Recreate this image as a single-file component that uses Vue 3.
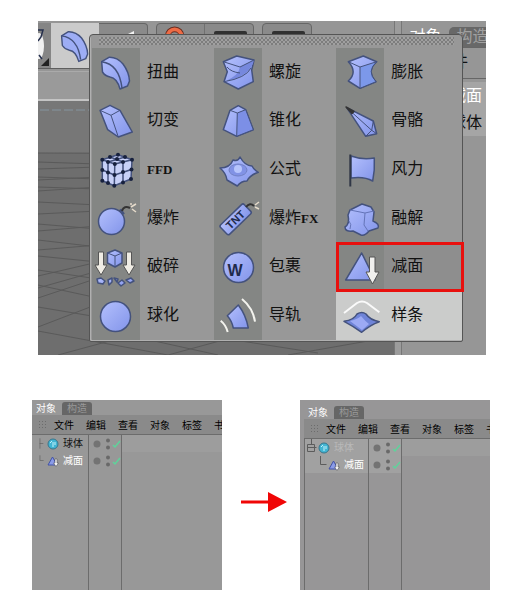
<template>
  <main class="page">
    <section class="scene">
      <div class="workspace">
        <div class="toolbar">
          <button class="tool-corner" aria-label="选项">
            <svg viewBox="0 0 12 45" width="12" height="45">
              <ellipse cx="1" cy="23" rx="5" ry="13" fill="#f0f0f0" />
              <path d="M0 7h5l-2 7-3 4M1 32l3 4" fill="none" stroke="#26304e" stroke-width="1.5" />
              <path d="M11 35v8H3z" fill="#222" />
            </svg>
          </button>
          <button class="tool-active" aria-label="变形器">
            <svg viewBox="0 0 48 48" width="48" height="45" class="shape">
              <path d="M9.7 13.7L17 9.3Q25 9 31 16Q37 24 37.5 33L35.5 38L28 41Q25 30 18 29Q13 28 10.5 24Z" />
              <path d="M9.7 13.7Q27 16 30 39" fill="none" />
            </svg>
          </button>
          <div class="tool-group first">
            <svg viewBox="0 0 48 45" width="48" height="45"><path d="M27 11l8-4v8h-8z" fill="#f3f3f3" /></svg>
          </div>
          <div class="tool-group">
            <svg viewBox="0 0 48 45" width="47" height="45">
              <circle cx="18" cy="12" r="7" fill="none" stroke="#6b2d20" stroke-width="6" />
              <circle cx="18" cy="12" r="7" fill="none" stroke="#ee6b45" stroke-width="4" />
            </svg>
            <svg class="split" viewBox="0 0 48 45" width="48" height="45"><rect x="9" y="7" width="33" height="9" rx="2" fill="#303030" /></svg>
          </div>
          <div class="tool-group">
            <svg viewBox="0 0 48 45" width="48" height="45"><rect x="9" y="7" width="33" height="9" rx="2" fill="#303030" /></svg>
          </div>
        </div>
        <div class="view-menu"></div>
        <div class="viewport">
          <svg viewBox="0 0 356 254" preserveAspectRatio="none">
            <rect width="356" height="254" fill="#6e6e6e" />
            <rect width="356" height="52" fill="#777" />
            <path d="M2 9h50" stroke="#8595a0" stroke-dasharray="9 3" />
            <g fill="none" stroke="#5a5a5a">
              <path d="M0 52L356 53M0 61L60 63M0 68L60 66M0 76L60 78M0 79L60 76" />
              <path d="M0 86L60 88M0 90L60 86M0 101L60 104M0 113L60 110" />
              <path d="M0 123L60 128M0 130L60 125M0 139L60 146M0 149L60 144" />
              <path d="M0 155L60 161M0 175L60 161M0 187L60 170M0 169L60 178" />
              <path d="M0 197L60 177M0 184L60 197M0 206L60 216M0 226L120 180" />
              <path d="M0 230L130 254M20 254L90 235M80 232L180 254M130 254L200 235M190 238L280 252M250 254L330 240" />
            </g>
          </svg>
        </div>
      </div>

      <aside class="dock">
        <div class="dock-tabs">
          <button class="dock-tab">对象</button>
          <button class="dock-tab dim">构造</button>
        </div>
        <div class="dock-menu">文件</div>
        <div class="dock-list">
          <span class="picked">减面</span>
          <span>球体</span>
        </div>
      </aside>

      <div class="popup" role="menu">
        <div class="grip"></div>
        <div class="tools">
          <button
            v-for="tool in tools"
            :key="tool.id"
            class="tool"
            :class="tool.state"
            role="menuitem"
          >
            <span class="tool-icon">
              <svg
                viewBox="0 0 48 48"
                width="48"
                height="48"
                class="shape"
                :style="{ fill: `url(#fill-${tool.id})` }"
              >
                <defs>
                  <linearGradient :id="'fill-' + tool.id" x1="0" y1="0" x2="1" y2="1">
                    <stop offset="0" stop-color="#b4c0fd" />
                    <stop offset="1" stop-color="#8294ea" />
                  </linearGradient>
                </defs>
                <template v-if="tool.id === 'bend'">
                  <path d="M9.7 13.7L17 9.3Q25 9 31 16Q37 24 37.5 33L35.5 38L28 41Q25 30 18 29Q13 28 10.5 24Z" />
                  <path d="M9.7 13.7Q27 16 30 40" fill="none" />
                </template>
                <template v-else-if="tool.id === 'twist'">
                  <path d="M9.3 13.7L22.7 8L40 12L37.7 22L39.3 33.7L24.3 41L10 33.7L13.3 23.7Z" />
                  <path d="M26 19L40 12Q37 28 12 33Q25 27 26 19Z" fill="#7688dd" stroke="none" />
                  <path d="M9.3 13.7L26 19L40 12M13 19Q17 24 26 25M37 20Q32 30 10 33.7" fill="none" stroke-width="1" />
                </template>
                <template v-else-if="tool.id === 'bulge'">
                  <path d="M12.3 13.7L27.3 8L40.7 13.7Q30 23 40 33.7L24 40.3L12.3 33Q22 24 12.3 13.7Z" />
                  <path d="M24 19L40.7 13.7Q30 23 40 33.7L24 40.3Z" fill="#7c98ea" stroke-width="1" />
                  <path d="M12.3 13.7L24 19" stroke-width="1" />
                </template>
                <template v-else-if="tool.id === 'shear'">
                  <path d="M8 13.3L18 8.3L28 13.3L40.3 35L26.3 40L15.7 32.7Z" />
                  <path d="M8 13.3L19 18.3L28 13.3M19 18.3L26.3 40" fill="none" stroke-width="1" />
                </template>
                <template v-else-if="tool.id === 'taper'">
                  <path d="M16 13.3L24.3 8.7L31.7 12.7L39.3 32.7L22.7 39.3L9.3 32.7Z" />
                  <path d="M23.3 16L31.7 12.7L39.3 32.7L22.7 39.3Z" fill="#7c8fe6" stroke-width="1" />
                  <path d="M16 13.3L23.3 16" stroke-width="1" />
                </template>
                <template v-else-if="tool.id === 'bone'">
                  <path d="M10.7 10.7L37.3 24L40.7 36.7L29.7 39.3Z" />
                  <path d="M10.7 10.7L35.7 33.3L40.7 36.7M35.7 33.3L29.7 39.3M35.7 33.3L37.3 24" fill="none" stroke-width="1" />
                  <path d="M10 10L18 14.5L16 16.5Z" fill="#333" stroke="#333" />
                </template>
                <template v-else-if="tool.id === 'ffd'">
                  <path d="M10.3 13.7L26 8.7L40 13.7L39 33L22.3 39.7L10.3 34.7Z" fill="#c8d1f8" />
                  <path
                    d="M10.3 13.7L22.8 18L40 13.7M22.8 18L22.3 39.7M10.3 24L22.5 29L39.5 23.5M16 16L16 37M31 16L31 36.5M18 11L31 16M33 11L16 16"
                    fill="none"
                  />
                  <circle v-for="(p, i) in ffdPoints" :key="i" :cx="p[0]" :cy="p[1]" r="2" fill="#17213e" stroke="none" />
                </template>
                <template v-else-if="tool.id === 'formula'">
                  <path d="M6 22Q16 22 19 14Q24 16 26 11Q31 20 38 20Q40 24 44.3 26.3Q36 29 33 35Q27 35 23.3 40Q18 37 13 34Q12 27 6 22Z" />
                  <ellipse cx="24" cy="24" rx="9" ry="6" fill="#8192e5" stroke="#7180c4" stroke-width="1" />
                  <circle cx="24" cy="23" r="4" fill="#b6c4fc" stroke="none" />
                </template>
                <template v-else-if="tool.id === 'wind'">
                  <path d="M15 10Q26 14 38.3 12Q39 24 36.7 35Q28 30 15 32Z" />
                  <path d="M14.3 8.5V40.5" stroke="#303746" stroke-width="2" />
                </template>
                <template v-else-if="tool.id === 'bomb'">
                  <path d="M27 20L31 17" stroke-width="6" />
                  <circle cx="19.5" cy="27.5" r="13" />
                  <path d="M30 17Q32 11 38 14" fill="none" stroke="#333" stroke-width="2" />
                  <path d="M39 13l5-3M40 15l4 3M39 11v-2" stroke="#e6dccb" />
                </template>
                <template v-else-if="tool.id === 'tnt'">
                  <g transform="rotate(-44 22 25)">
                    <rect x="5" y="18.5" width="33" height="13" rx="2" />
                    <text x="21" y="29" class="tnt">TNT</text>
                  </g>
                  <path d="M32 13Q36 8 40 12" fill="none" stroke="#333" stroke-width="2" />
                  <path d="M41 11l4-3M41 13l4 2" stroke="#e6dccb" />
                </template>
                <template v-else-if="tool.id === 'melt'">
                  <path d="M14 16L26 10L35 13L38 18L37 27Q44 30 42 34L33 37Q29 42 25 41L17 37Q9 38 9 33Q14 30 12 21Z" />
                  <path d="M14 16L29 19L38 17M29 19L28 31L32 37M13 27Q16 30 14 35" fill="none" stroke="#6474b8" stroke-width="1" />
                </template>
                <template v-else-if="tool.id === 'crush'">
                  <path d="M15.5 10L23 7L30 10V20L23 24L15.5 20Z" />
                  <path d="M15.5 10L23 13L30 10M23 13V24" fill="none" stroke-width="1" />
                  <path
                    d="M6.5 9h5v13h3.5l-6 10-6-10h3.5zM34.5 9h5v13h3.5l-6 10-6-10h3.5z"
                    fill="#efece4" stroke="#555" stroke-width="1"
                  />
                  <path d="M5 36l4-1 4 3-2 3-5-1zM16 37l4-2v4l-3 3zM22 35l4 1-1 3zM26 40l4-3 3 3-4 3zM34 37l5-2 3 3-4 2z" />
                </template>
                <template v-else-if="tool.id === 'wrap'">
                  <circle cx="24.5" cy="24.5" r="15" />
                  <text x="21" y="33" class="wrap-letter">W</text>
                </template>
                <template v-else-if="tool.id === 'reduce'">
                  <path d="M25.7 10L9.7 37H39Z" />
                  <path d="M33.5 14H39v15h4l-6.500 12-6.500-12h3.500z" fill="#f0f0ee" stroke="#555" stroke-width="1" />
                </template>
                <template v-else-if="tool.id === 'sphere'">
                  <circle cx="23.5" cy="24.5" r="15" />
                </template>
                <template v-else-if="tool.id === 'rail'">
                  <path d="M13.3 23.7L24.3 13Q32 23 34.3 36H19.3Q18 29 13.3 23.7Z" />
                  <path d="M28 7Q39 16 41 29.7M6.700 28.7Q12 33 13.7 40" fill="none" stroke="#f3f3ee" stroke-width="2" />
                </template>
                <template v-else>
                  <path d="M8 29.3Q18 28 21 22Q26 19 30 22Q34 28 43.3 29.7Q34 33 25.7 40.3Q17 34 8 29.3Z" fill="#6f84d8" />
                  <path d="M14 29Q22 27 25 24Q29 29 33 32L26 38Z" fill="#9caaf4" stroke="none" />
                  <path d="M8 21L21 11Q26 8 31 11L43.3 20.3" fill="none" stroke="#fafafa" stroke-width="2" />
                </template>
              </svg>
            </span>
            <span class="tool-name">{{ tool.name }}<span class="latin">{{ tool.latin }}</span></span>
          </button>
        </div>
      </div>
    </section>

    <section class="steps">
      <div v-for="panel in panels" :key="panel.id" class="manager" :class="panel.id">
        <div class="tabs">
          <button class="tab">对象</button>
          <button class="tab off">构造</button>
        </div>
        <div class="menu">
          <span class="menu-grip"></span>
          <button v-for="item in menuItems" :key="item">{{ item }}</button>
        </div>
        <div class="body">
          <div class="names">
            <div v-for="row in panel.rows" :key="row.name" class="row" :class="[row.tone, { child: row.child }]">
              <svg class="branch" viewBox="0 0 13 17" width="13" height="17">
                <path :d="row.branch" fill="none" stroke="#5c5c5c" />
              </svg>
              <svg v-if="row.name === '球体'" viewBox="0 0 12 12" width="12" height="12">
                <circle cx="6" cy="6" r="5" fill="#42b5d3" stroke="#39758b" />
                <path d="M3 5l2-2M6 4v5M8 4v3" stroke="#c3f1fa" />
              </svg>
              <svg v-else viewBox="0 0 12 12" width="12" height="12">
                <path d="M5.5 2L1 10h9z" fill="#8a9be8" stroke="#4253a5" />
                <path d="M8 4h2v4h1.5L9 11.5 6.500 8H8z" fill="#f5f5f5" stroke="#444" stroke-width=".5" />
              </svg>
              <span>{{ row.name }}</span>
            </div>
          </div>
          <div class="flags">
            <div v-for="row in panel.rows" :key="row.name" class="row">
              <svg viewBox="0 0 32 17" width="32" height="17">
                <circle cx="8" cy="9" r="3.5" fill="#737373" />
                <circle cx="19" cy="5.5" r="2" fill="#696969" />
                <circle cx="19" cy="12.5" r="2" fill="#696969" />
                <path d="M24 10l2 2 5-6" fill="none" stroke="#5fd39b" stroke-width="1.5" />
              </svg>
            </div>
          </div>
          <div class="tags"></div>
        </div>
      </div>
      <svg class="arrow" viewBox="0 0 48 20" width="48" height="20">
        <path d="M1 8.5h27V0l19 10-19 10v-8.500H1z" fill="#f00606" />
      </svg>
    </section>
  </main>
</template>

<script setup>
const tools = [
  { id: 'bend', name: '扭曲' },
  { id: 'twist', name: '螺旋' },
  { id: 'bulge', name: '膨胀' },
  { id: 'shear', name: '切变' },
  { id: 'taper', name: '锥化' },
  { id: 'bone', name: '骨骼' },
  { id: 'ffd', name: '', latin: 'FFD' },
  { id: 'formula', name: '公式' },
  { id: 'wind', name: '风力' },
  { id: 'bomb', name: '爆炸' },
  { id: 'tnt', name: '爆炸', latin: 'FX' },
  { id: 'melt', name: '融解' },
  { id: 'crush', name: '破碎' },
  { id: 'wrap', name: '包裹' },
  { id: 'reduce', name: '减面', state: 'marked' },
  { id: 'sphere', name: '球化' },
  { id: 'rail', name: '导轨' },
  { id: 'spline', name: '样条', state: 'hover' }
]

// FFD 控制点
const ffdPoints = [
  [10.3, 13.7], [18, 11], [26, 8.7], [33, 11], [40, 13.7], [16, 16], [31, 16], [22.8, 18], [25, 13],
  [10.3, 24], [16, 26.5], [22.5, 29], [31, 26], [39.5, 23.5],
  [10.3, 34.7], [16, 37], [22.3, 39.7], [31, 36.5], [39, 33]
]

const menuItems = ['文件', '编辑', '查看', '对象', '标签', '书签']

const panels = [
  {
    id: 'before',
    rows: [
      { name: '球体', tone: 'dark', branch: 'M1.5 0v17M1 8.5h6' },
      { name: '减面', tone: 'light', branch: 'M1.5 0v8.5h6' }
    ]
  },
  {
    id: 'after',
    rows: [
      { name: '球体', tone: 'faint', branch: 'M6.5 0v5M2.5 5.5h7v7h-7zM2.5 8.5h9' },
      { name: '减面', tone: 'light', child: true, branch: 'M5.5 0v8.5h6' }
    ]
  }
]
</script>

<style>
body {
  margin: 0;
  background: #fff;
}
</style>

<style scoped>
.page {
  font-family: "Liberation Sans", "Noto Sans CJK SC", sans-serif;
  padding: 21px 25px 19px 32px;
  color: #111;
}

svg {
  display: block;
  flex: none;
}

button {
  padding: 0;
  border: 0;
  background: none;
  font: inherit;
  color: inherit;
}

.shape {
  fill: #9dadf5;
  stroke: #44527d;
  stroke-width: 1.5;
  stroke-linejoin: round;
}

.scene {
  position: relative;
  display: flex;
  height: 334px;
  margin: 0 4px 0 6px;
  background: #969696;
  overflow: hidden;
}

.workspace {
  flex: 1;
  min-width: 0;
  display: flex;
  flex-direction: column;
}

.toolbar {
  display: flex;
  height: 48px;
  padding-top: 2px;
  box-sizing: border-box;
}

.tool-corner,
.tool-active,
.tool-group {
  height: 46px;
  border-bottom: 1px solid #5f5f5f;
  box-sizing: border-box;
}

.tool-corner {
  width: 13px;
  background: #858585;
}

.tool-active {
  background: #cbcbcb;
}

.tool-group {
  display: flex;
  margin-right: 8px;
  background: #8a8a8a;
  border: 1px solid #666;
  border-radius: 4px;
  overflow: hidden;
}

.tool-group.first {
  border-left: 0;
  border-radius: 0 4px 4px 0;
}

.split {
  border-left: 1px solid #707070;
}

.view-menu {
  height: 30px;
  margin-top: 2px;
  background: #9a9a9a;
  border-top: 1px solid #aaa;
  border-bottom: 2px solid #c4c4c4;
  box-sizing: border-box;
}

.viewport {
  flex: 1;
  min-height: 0;
}

.viewport svg {
  width: 100%;
  height: 100%;
}

.dock {
  width: 84px;
  padding-left: 7px;
  border-left: 1px solid #777;
  background: linear-gradient(90deg, #9c9c9c 6px, #777 6px, #777 7px, #969696 7px);
  font-size: 16px;
}

.dock-tabs {
  display: flex;
  height: 26px;
  padding-top: 6px;
  box-sizing: border-box;
}

.dock-tab {
  flex: none;
  width: 47px;
  height: 20px;
  line-height: 18px;
  color: #fff;
}

.dock-tab.dim {
  background: #686868;
  color: #a0a0a0;
  border-radius: 5px 0 0 0;
}

.dock-menu {
  height: 32px;
  margin-bottom: 3px;
  padding-right: 18px;
  line-height: 28px;
  text-align: right;
  border-top: 1px solid #666;
  border-bottom: 1px solid #666;
  box-sizing: border-box;
}

.dock-list {
  display: flex;
  flex-direction: column;
  height: 54px;
  padding-right: 4px;
  background: #a5a5a5;
  text-align: right;
  line-height: 27px;
}

.picked {
  color: #fff;
}

.popup {
  position: absolute;
  top: 13px;
  right: 23px;
  bottom: 13px;
  left: 51px;
  display: flex;
  flex-direction: column;
  padding: 0 0 1px 2px;
  background: #989898;
  border: 1px solid #555;
  border-radius: 4px 4px 2px 2px;
  box-shadow: inset 1px -1px 0 #b0b0b0;
  box-sizing: border-box;
}

.grip {
  height: 8px;
  margin: 2px 8px 3px 7px;
  background: conic-gradient(#7d7d7d 25%, #a0a0a0 0 50%, #7d7d7d 0 75%, #a0a0a0 0) 0 0 / 4px 4px;
}

.tools {
  flex: 1;
  display: grid;
  grid-template-columns: 33fr 33fr 34fr;
  grid-auto-rows: 1fr;
}

.tool {
  position: relative;
  display: flex;
  align-items: stretch;
  min-height: 0;
  font-size: 16px;
  text-align: left;
}

.tool-icon {
  display: flex;
  align-items: center;
  width: 48px;
  height: 100%;
  background: #848684;
}

.tool-name {
  align-self: center;
  padding-left: 7px;
  line-height: 20px;
  white-space: nowrap;
}

.latin {
  font-family: "Liberation Serif", serif;
  font-size: 13px;
  font-weight: bold;
}

.marked {
  background: #8e8e8e;
}

.marked::after {
  content: "";
  position: absolute;
  inset: -1px -2px -1px 0;
  border: 3px solid #e8100e;
  z-index: 1;
}

.hover,
.hover .tool-icon {
  background: #cbcccb;
}

.tnt,
.wrap-letter {
  font-family: "Liberation Sans", sans-serif;
  font-weight: bold;
  text-anchor: middle;
  fill: #1f2b4c;
  stroke: none;
}

.tnt {
  font-size: 11px;
}

.wrap-letter {
  font-size: 16px;
}

.steps {
  position: relative;
  display: flex;
  justify-content: space-between;
  margin-top: 45px;
}

.manager {
  width: 190px;
  height: 190px;
  display: flex;
  flex-direction: column;
  background: #989898;
  font-size: 10px;
  overflow: hidden;
}

.after {
  padding: 4px 0 0 4px;
  box-sizing: border-box;
  background: #979697;
}

.arrow {
  position: absolute;
  left: calc(50% - 21px);
  top: 92px;
}

.tabs {
  display: flex;
  align-items: flex-end;
  gap: 6px;
  height: 15px;
  padding-left: 4px;
  line-height: 13px;
}

.tab {
  height: 13px;
  color: #fff;
}

.tab.off {
  width: 30px;
  background: #666;
  color: #999;
  border-radius: 3px 3px 0 0;
}

.menu {
  display: flex;
  align-items: center;
  gap: 12px;
  height: 20px;
  padding-left: 6px;
  background: #8a8a8a;
  border-bottom: 1px solid #6c6c6c;
  box-sizing: border-box;
  white-space: nowrap;
}

.menu button {
  flex: none;
  color: #000;
}

.menu-grip {
  flex: none;
  width: 8px;
  height: 9px;
  margin-right: -4px;
  background: radial-gradient(#6c6c6c 1px, transparent 1px) 0 0 / 3px 3px;
}

.body {
  flex: 1;
  display: flex;
}

.names {
  width: 57px;
  border-right: 1px solid #6c6c6c;
  box-sizing: border-box;
}

.before .names {
  padding-left: 7px;
}

.before .branch {
  width: 8px;
  overflow: visible;
}

.after .names {
  width: 65px;
  border-left: 1px solid #6c6c6c;
}

.flags {
  width: 33px;
  border-right: 1px solid #6c6c6c;
  box-sizing: border-box;
}

.tags {
  flex: 1;
  background: linear-gradient(#9d9d9d 17px, transparent 17px);
}

.row {
  display: flex;
  align-items: center;
  height: 17px;
  line-height: 17px;
}

.names .row span {
  margin-left: 4px;
  white-space: nowrap;
}

.after .row {
  background: #a1a1a1;
}

.child {
  padding-left: 10px;
}

.light {
  color: #fff;
}

.faint {
  color: #b9b9b9;
}
</style>
